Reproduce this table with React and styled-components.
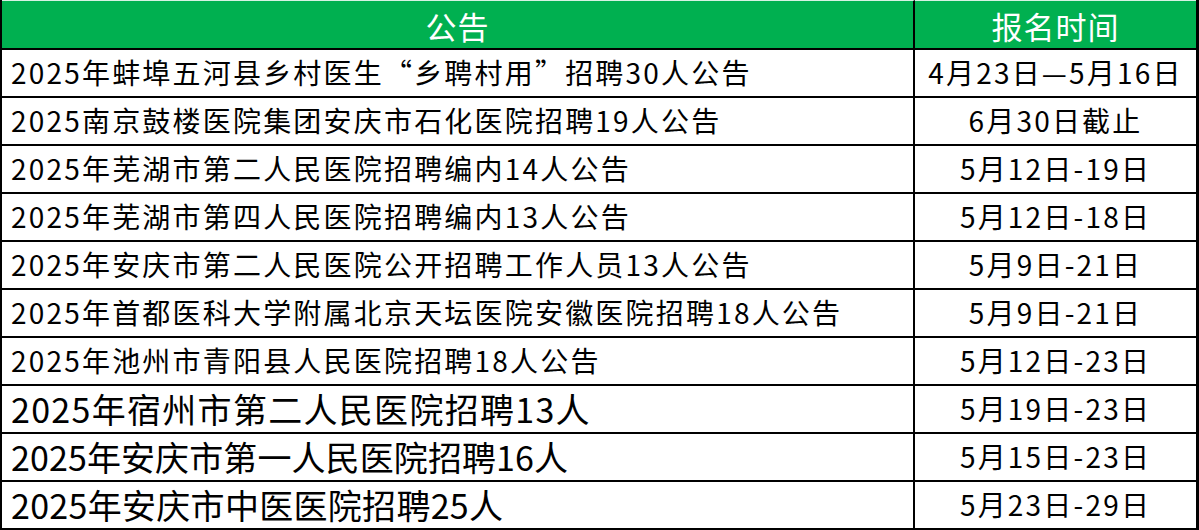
import React from "react";
import styled, { createGlobalStyle } from "styled-components";

const GlobalStyle = createGlobalStyle`
  html, body { margin: 0; padding: 0; background: #ffffff; }
  body { font-family: "Noto Sans CJK SC", "Noto Sans", sans-serif; }
`;

const Table = styled.div`
  box-sizing: border-box;
  width: 1199px;
  height: 530px;
  display: grid;
  grid-template-columns: 913px 1fr;
  grid-template-rows: 50px repeat(10, 48px);
  border-left: 2px solid #000;
  border-right: 3px solid #000;
  background: #fff;
`;

const HeadCell = styled.div`
  box-sizing: border-box;
  background: #00b050;
  color: #ffffff;
  border-top: 1px solid #d6f2e4;
  border-bottom: 2px solid #000;
  border-right: ${(p) => (p.$last ? "none" : "2px solid #000")};
  display: flex;
  align-items: center;
  justify-content: center;
  font-size: 31px;
  letter-spacing: 1px;
  line-height: 1.2;
  padding-top: 3px;
`;

const Cell = styled.div`
  box-sizing: border-box;
  border-bottom: 2px solid #000;
  border-right: ${(p) => (p.$last ? "none" : "2px solid #000")};
  display: flex;
  align-items: center;
  justify-content: ${(p) => (p.$center ? "center" : "flex-start")};
  padding-left: ${(p) => (p.$center ? "0" : "9px")};
  color: #000;
  font-size: ${(p) => (p.$big ? "34px" : "28px")};
  letter-spacing: ${(p) => p.$ls}px;
  line-height: 1.2;
  white-space: nowrap;
`;

const rows = [
  ["2025年蚌埠五河县乡村医生“乡聘村用”招聘30人公告", "4月23日—5月16日"],
  ["2025南京鼓楼医院集团安庆市石化医院招聘19人公告", "6月30日截止"],
  ["2025年芜湖市第二人民医院招聘编内14人公告", "5月12日-19日"],
  ["2025年芜湖市第四人民医院招聘编内13人公告", "5月12日-18日"],
  ["2025年安庆市第二人民医院公开招聘工作人员13人公告", "5月9日-21日"],
  ["2025年首都医科大学附属北京天坛医院安徽医院招聘18人公告", "5月9日-21日"],
  ["2025年池州市青阳县人民医院招聘18人公告", "5月12日-23日"],
  ["2025年宿州市第二人民医院招聘13人", "5月19日-23日", true, 1.3],
  ["2025年安庆市第一人民医院招聘16人", "5月15日-23日", true, 0.1],
  ["2025年安庆市中医医院招聘25人", "5月23日-29日", true, 0.3],
];

export default function App() {
  return (
    <>
      <GlobalStyle />
      <Table>
        <HeadCell>公告</HeadCell>
        <HeadCell $last>报名时间</HeadCell>
        {rows.map(([title, date, big, ls], i) => (
          <React.Fragment key={i}>
            <Cell $big={big} $ls={big ? ls : 2.2}>{title}</Cell>
            <Cell $center $last $ls={2.2}>{date}</Cell>
          </React.Fragment>
        ))}
      </Table>
    </>
  );
}
